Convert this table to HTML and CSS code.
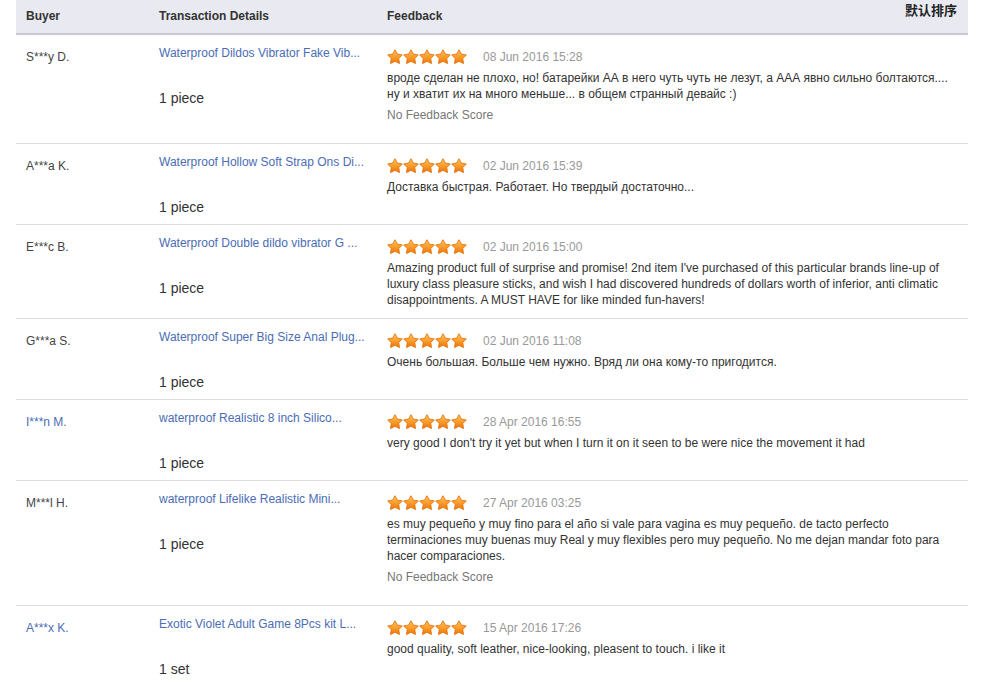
FILE: index.html
```html
<!DOCTYPE html>
<html lang="en">
<head>
<meta charset="utf-8">
<title>Feedback</title>
<link rel="stylesheet" href="styles.css">
</head>
<body>
<svg class="defs" width="0" height="0" aria-hidden="true">
  <defs>
    <linearGradient id="sg" x1="0" y1="0" x2="0" y2="1">
      <stop offset="0" stop-color="#ffc85a"/>
      <stop offset="0.55" stop-color="#f99a2a"/>
      <stop offset="1" stop-color="#ee7406"/>
    </linearGradient>
    <symbol id="star" viewBox="0 0 16 16">
      <path d="M8 0.7 L10.35 5.06 L15.3 5.9 L11.8 9.54 L12.5 14.6 L8 12.3 L3.5 14.6 L4.2 9.54 L0.7 5.9 L5.65 5.06 Z" fill="url(#sg)" stroke="#e26c00" stroke-width="0.8" stroke-linejoin="round"/>
    </symbol>
  </defs>
</svg>

<div class="table">
  <div class="thead">
    <div class="c">Buyer</div>
    <div class="c">Transaction Details</div>
    <div class="c">Feedback</div>
    <div class="sort">默认排序</div>
  </div>

  <div class="row">
    <div class="buyer">S***y D.</div>
    <div class="detail"><a class="link" href="#">Waterproof Dildos Vibrator Fake Vib...</a><div class="qty">1 piece</div></div>
    <div class="fb">
      <div class="meta"><svg class="stars" width="80" height="16" viewBox="0 0 80 16"><use href="#star" x="0" width="16" height="16"/><use href="#star" x="16" width="16" height="16"/><use href="#star" x="32" width="16" height="16"/><use href="#star" x="48" width="16" height="16"/><use href="#star" x="64" width="16" height="16"/></svg><span class="date">08 Jun 2016 15:28</span></div>
      <p class="text">вроде сделан не плохо, но! батарейки АА в него чуть чуть не лезут, а ААА явно сильно болтаются.... ну и хватит их на много меньше... в общем странный девайс :)</p>
      <div class="score">No Feedback Score</div>
    </div>
  </div>

  <div class="row">
    <div class="buyer">A***a K.</div>
    <div class="detail"><a class="link" href="#">Waterproof Hollow Soft Strap Ons Di...</a><div class="qty">1 piece</div></div>
    <div class="fb">
      <div class="meta"><svg class="stars" width="80" height="16" viewBox="0 0 80 16"><use href="#star" x="0" width="16" height="16"/><use href="#star" x="16" width="16" height="16"/><use href="#star" x="32" width="16" height="16"/><use href="#star" x="48" width="16" height="16"/><use href="#star" x="64" width="16" height="16"/></svg><span class="date">02 Jun 2016 15:39</span></div>
      <p class="text">Доставка быстрая. Работает. Но твердый достаточно...</p>
    </div>
  </div>

  <div class="row">
    <div class="buyer">E***c B.</div>
    <div class="detail"><a class="link" href="#">Waterproof Double dildo vibrator G ...</a><div class="qty">1 piece</div></div>
    <div class="fb">
      <div class="meta"><svg class="stars" width="80" height="16" viewBox="0 0 80 16"><use href="#star" x="0" width="16" height="16"/><use href="#star" x="16" width="16" height="16"/><use href="#star" x="32" width="16" height="16"/><use href="#star" x="48" width="16" height="16"/><use href="#star" x="64" width="16" height="16"/></svg><span class="date">02 Jun 2016 15:00</span></div>
      <p class="text">Amazing product full of surprise and promise! 2nd item I've purchased of this particular brands line-up of luxury class pleasure sticks, and wish I had discovered hundreds of dollars worth of inferior, anti climatic disappointments. A MUST HAVE for like minded fun-havers!</p>
    </div>
  </div>

  <div class="row">
    <div class="buyer">G***a S.</div>
    <div class="detail"><a class="link" href="#">Waterproof Super Big Size Anal Plug...</a><div class="qty">1 piece</div></div>
    <div class="fb">
      <div class="meta"><svg class="stars" width="80" height="16" viewBox="0 0 80 16"><use href="#star" x="0" width="16" height="16"/><use href="#star" x="16" width="16" height="16"/><use href="#star" x="32" width="16" height="16"/><use href="#star" x="48" width="16" height="16"/><use href="#star" x="64" width="16" height="16"/></svg><span class="date">02 Jun 2016 11:08</span></div>
      <p class="text">Очень большая. Больше чем нужно. Вряд ли она кому-то пригодится.</p>
    </div>
  </div>

  <div class="row">
    <div class="buyer blue">I***n M.</div>
    <div class="detail"><a class="link" href="#">waterproof Realistic 8 inch Silico...</a><div class="qty">1 piece</div></div>
    <div class="fb">
      <div class="meta"><svg class="stars" width="80" height="16" viewBox="0 0 80 16"><use href="#star" x="0" width="16" height="16"/><use href="#star" x="16" width="16" height="16"/><use href="#star" x="32" width="16" height="16"/><use href="#star" x="48" width="16" height="16"/><use href="#star" x="64" width="16" height="16"/></svg><span class="date">28 Apr 2016 16:55</span></div>
      <p class="text">very good I don't try it yet but when I turn it on it seen to be were nice the movement it had</p>
    </div>
  </div>

  <div class="row">
    <div class="buyer">M***l H.</div>
    <div class="detail"><a class="link" href="#">waterproof Lifelike Realistic Mini...</a><div class="qty">1 piece</div></div>
    <div class="fb">
      <div class="meta"><svg class="stars" width="80" height="16" viewBox="0 0 80 16"><use href="#star" x="0" width="16" height="16"/><use href="#star" x="16" width="16" height="16"/><use href="#star" x="32" width="16" height="16"/><use href="#star" x="48" width="16" height="16"/><use href="#star" x="64" width="16" height="16"/></svg><span class="date">27 Apr 2016 03:25</span></div>
      <p class="text">es muy pequeño y muy fino para el año si vale para vagina es muy pequeño. de tacto perfecto terminaciones muy buenas muy Real y muy flexibles pero muy pequeño. No me dejan mandar foto para hacer comparaciones.</p>
      <div class="score">No Feedback Score</div>
    </div>
  </div>

  <div class="row">
    <div class="buyer blue">A***x K.</div>
    <div class="detail"><a class="link" href="#">Exotic Violet Adult Game 8Pcs kit L...</a><div class="qty">1 set</div></div>
    <div class="fb">
      <div class="meta"><svg class="stars" width="80" height="16" viewBox="0 0 80 16"><use href="#star" x="0" width="16" height="16"/><use href="#star" x="16" width="16" height="16"/><use href="#star" x="32" width="16" height="16"/><use href="#star" x="48" width="16" height="16"/><use href="#star" x="64" width="16" height="16"/></svg><span class="date">15 Apr 2016 17:26</span></div>
      <p class="text">good quality, soft leather, nice-looking, pleasent to touch. i like it</p>
    </div>
  </div>
</div>
</body>
</html>
```

FILE: styles.css
```css
html, body {
  margin: 0;
  padding: 0;
  background: #ffffff;
}

body {
  font-family: "Liberation Sans", Arial, "Noto Sans CJK SC", sans-serif;
  font-size: 12px;
  color: #333333;
  overflow: hidden;
}

.defs {
  position: absolute;
  width: 0;
  height: 0;
}

.table {
  margin-left: 16px;
  width: 952px;
}

.thead {
  display: grid;
  grid-template-columns: 133px 228px 1fr auto;
  height: 33px;
  background: #e9eaf1;
  border-bottom: 2px solid #c8c9d1;
  font-weight: bold;
  color: #333333;
}

.thead .c {
  padding-left: 10px;
  line-height: 33px;
}

.sort {
  align-self: start;
  padding: 2px 11px 0 0;
  line-height: 16px;
  font-family: "Noto Sans CJK SC", "Liberation Sans", sans-serif;
  font-weight: bold;
  font-size: 13px;
  color: #222222;
}

.row {
  display: grid;
  grid-template-columns: 133px 228px 1fr;
  padding: 10px 0 9px;
  border-bottom: 1px solid #dedede;
}

.buyer {
  padding: 4px 0 0 10px;
  line-height: 16px;
  color: #444444;
}

.buyer.blue {
  color: #4a6db5;
}

.detail {
  padding-left: 10px;
}

.link {
  display: block;
  line-height: 16px;
  color: #4a6db5;
  text-decoration: none;
  white-space: nowrap;
}

.qty {
  margin-top: 29px;
  font-size: 14px;
  line-height: 16px;
  color: #333333;
}

.fb {
  padding: 4px 0 1px 10px;
}

.meta {
  display: flex;
  align-items: center;
  height: 16px;
  gap: 16px;
}

.stars {
  display: block;
  flex: none;
}

.date {
  color: #999999;
  line-height: 16px;
}

.text {
  margin: 5px 0 0;
  max-width: 566px;
  line-height: 16px;
  color: #333333;
}

.score {
  margin: 5px 0 10px;
  line-height: 16px;
  color: #777777;
}
```
